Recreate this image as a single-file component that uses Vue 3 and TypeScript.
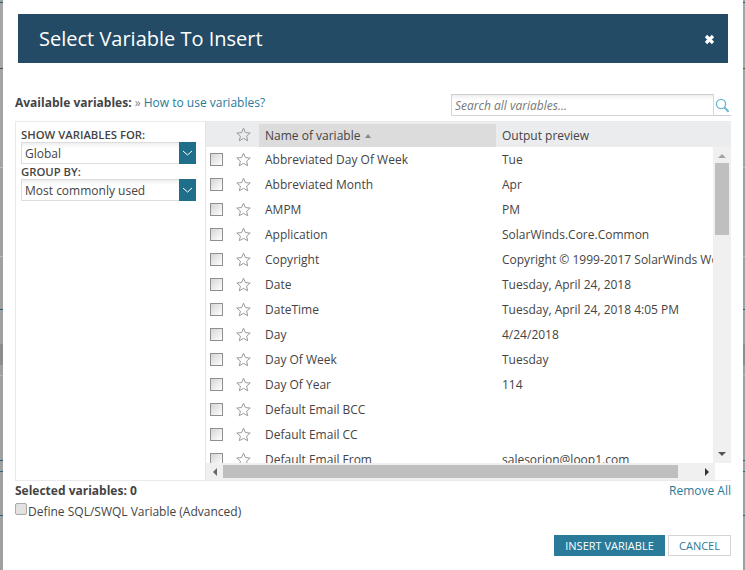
<script setup lang="ts">
interface Row { name: string; preview: string }
const rows: Row[] = [
  { name: 'Abbreviated Day Of Week', preview: 'Tue' },
  { name: 'Abbreviated Month', preview: 'Apr' },
  { name: 'AMPM', preview: 'PM' },
  { name: 'Application', preview: 'SolarWinds.Core.Common' },
  { name: 'Copyright', preview: 'Copyright © 1999-2017 SolarWinds Worldwide' },
  { name: 'Date', preview: 'Tuesday, April 24, 2018' },
  { name: 'DateTime', preview: 'Tuesday, April 24, 2018 4:05 PM' },
  { name: 'Day', preview: '4/24/2018' },
  { name: 'Day Of Week', preview: 'Tuesday' },
  { name: 'Day Of Year', preview: '114' },
  { name: 'Default Email BCC', preview: '' },
  { name: 'Default Email CC', preview: '' },
  { name: 'Default Email From', preview: 'salesorion@loop1.com' },
]
const star = 'M7.5 1.2 9.4 5.6 14.2 6 10.6 9.1 11.7 13.8 7.5 11.3 3.3 13.8 4.4 9.1.8 6 5.6 5.6Z'
</script>

<template>
  <div class="page">
    <div class="edge edge-left"></div>
    <main class="dialog">
      <header class="title-bar">
        <h1>Select Variable To Insert</h1>
        <svg class="close" width="11" height="11" viewBox="0 0 11 11"><path d="M2 2 9 9M9 2 2 9" stroke="#fff" stroke-width="3.2" /></svg>
      </header>

      <div class="tools">
        <div class="avail"><b>Available variables:</b> <span class="raquo">»</span> <a>How to use variables?</a></div>
        <div class="search">
          <div class="search-box">Search all variables...</div>
          <div class="search-btn">
            <svg width="15" height="15" viewBox="0 0 15 15"><circle cx="6" cy="6" r="4.6" fill="none" stroke="#6db7d3" stroke-width="1.4" /><path d="M9.5 9.5 13.6 13.8" stroke="#6db7d3" stroke-width="2" /></svg>
          </div>
        </div>
      </div>

      <section class="panel">
        <aside class="filters">
          <label>SHOW VARIABLES FOR:</label>
          <div class="select"><span>Global</span><i><svg width="11" height="6" viewBox="0 0 11 6"><path d="M1 1 5.5 5 10 1" fill="none" stroke="#fff" stroke-width="1" /></svg></i></div>
          <label>GROUP BY:</label>
          <div class="select"><span>Most commonly used</span><i><svg width="11" height="6" viewBox="0 0 11 6"><path d="M1 1 5.5 5 10 1" fill="none" stroke="#fff" stroke-width="1" /></svg></i></div>
        </aside>

        <div class="grid">
          <div class="head">
            <div class="c-check"></div>
            <div class="c-star"><svg width="15" height="15" viewBox="0 0 15 15"><path :d="star" fill="none" stroke="#9a9a9a" /></svg></div>
            <div class="c-name sorted">Name of variable <span class="sort"></span></div>
            <div class="c-prev">Output preview</div>
          </div>
          <div class="middle">
            <div class="body">
              <div v-for="r in rows" :key="r.name" class="row">
                <div class="c-check"><span class="check"></span></div>
                <div class="c-star"><svg width="15" height="15" viewBox="0 0 15 15"><path :d="star" fill="none" stroke="#9a9a9a" /></svg></div>
                <div class="c-name">{{ r.name }}</div>
                <div class="c-prev">{{ r.preview }}</div>
              </div>
            </div>
            <div class="vbar">
              <span class="arrow up"></span>
              <div class="vtrack"><div class="vthumb"></div></div>
              <span class="arrow down"></span>
            </div>
          </div>
          <div class="hbar">
            <div class="hscroll">
              <span class="arrow left"></span>
              <div class="htrack"><div class="hthumb"></div></div>
              <span class="arrow right"></span>
            </div>
            <div class="corner"></div>
          </div>
        </div>
      </section>

      <div class="selected">
        <b>Selected variables: 0</b>
        <a>Remove All</a>
      </div>
      <div class="define"><span class="native-check"></span>Define SQL/SWQL Variable (Advanced)</div>

      <footer class="actions">
        <button class="primary">INSERT VARIABLE</button>
        <button class="secondary">CANCEL</button>
      </footer>
    </main>
    <div class="edge edge-right"></div>
  </div>
</template>

<style>
html, body { margin: 0; background: #fff; overflow: hidden; }
</style>

<style scoped>
.page {
  width: 745px; height: 570px; display: flex; overflow: hidden;
  font-family: "Open Sans", sans-serif; font-size: 12px; color: #444;
  background: #fff;
}
.edge {
  flex: none;
  background:
    linear-gradient(#9f9f9f 0 2px, #2d6076 2px 3px, #a6a6a6 3px 68px, #5c4a3a 68px 69px, #a3a3a3 69px 167px,
      #bbb 167px 168px, #a0a0a0 168px 256px, #bbb 256px 257px, #a0a0a0 257px 309px, #1f6079 309px 310px,
      #a0a0a0 310px 344px, #8d8d8d 344px 365px, #a0a0a0 365px 375px, #b5b5b5 375px 376px, #a0a0a0 376px 460px,
      #1f5f78 460px 461px, #a0a0a0 461px 471px, #2b6378 471px 472px, #a0a0a0 472px 515px, #2b5f75 515px 516px, #a0a0a0 516px);
}
.edge-left { width: 3px; }
.edge-right { width: 2px; margin-left: auto; }
.dialog { width: 740px; flex: none; padding-top: 14px; box-sizing: border-box; }
.title-bar {
  margin: 0 15px; height: 49px; background: #234b66; color: #fff;
  display: flex; align-items: center; justify-content: space-between;
  padding: 0 13px 0 21px;
}
.title-bar h1 { margin: 0; font-size: 20px; font-weight: 400; line-height: 49px; }
.close { margin-top: 2px; }
.tools {
  margin: 31px 12px 0; height: 27px; display: flex; justify-content: space-between; align-items: flex-start;
}
.avail { line-height: 18px; font-size: 12px; }
.avail b { font-weight: 700; color: #444; }
.raquo { color: #888; }
a { color: #2a7a99; }
.search { display: flex; }
.search-box {
  width: 263px; height: 22px; box-sizing: border-box; border: 1px solid #d5d5d5; border-top-color: #ccc;
  font-style: italic; color: #777; padding-left: 3px; line-height: 22px;
  background: linear-gradient(#eee, #fff 5px);
}
.search-btn { width: 17px; height: 22px; box-sizing: border-box; border-bottom: 1px solid #ccd; display: flex; align-items: center; justify-content: center; padding-top: 1px; }
.panel {
  margin: 0 12px; height: 360px; display: flex; box-sizing: border-box;
  border: 1px solid #eaeaea; border-right: 0;
  width: 716px;
}
.filters { width: 190px; flex: none; box-sizing: border-box; padding: 5px 5px 0; border-right: 1px solid #e4e4e4; }
.filters label { display: block; font-weight: 600; font-size: 11.3px; line-height: 15px; color: #444; }
.select {
  height: 22px; display: flex; box-sizing: border-box; border: 1px solid #ddd;
  background: linear-gradient(#eee, #fff 5px); width: 175px;
}
.select span { flex: 1; padding-left: 3px; line-height: 22px; color: #444; }
.select i { width: 17px; margin: -1px; background: #1f6f8b; display: flex; align-items: center; justify-content: center; }
.grid { flex: 1; min-width: 0; display: flex; flex-direction: column; }
.head { height: 25px; flex: none; display: flex; background: #ebecee; box-sizing: border-box; padding-top: 2px; }
.head .c-star { margin-top: -2px; }
.c-check { width: 20px; flex: none; display: flex; align-items: center; padding-left: 4px; box-sizing: border-box; }
.c-star { width: 33px; flex: none; display: flex; align-items: center; padding-left: 10px; box-sizing: border-box; }
.c-name { width: 237px; flex: none; padding-left: 6px; box-sizing: border-box; line-height: 23px; }
.c-prev { flex: 1; min-width: 0; white-space: nowrap; overflow: hidden; padding-left: 6px; line-height: 23px; }
.sorted { background: #dcdcdc; }
.sort { display: inline-block; border: 3.5px solid transparent; border-bottom: 4px solid #888; border-top: 0; margin-left: 1px; vertical-align: 2px; }
.middle { flex: 1; min-height: 0; display: flex; }
.body { flex: 1; min-width: 0; overflow: hidden; }
.row { height: 25px; display: flex; }
.row .c-name, .row .c-prev { line-height: 25px; }
.check {
  width: 11px; height: 11px; border: 1px solid #8f8f8f; display: block; background: linear-gradient(135deg, #d5d5d5, #fff);
}
.vbar { width: 18px; flex: none; background: #f0f0f0; display: flex; flex-direction: column; align-items: center; }
.vtrack { flex: 1; width: 100%; }
.vthumb { height: 72px; width: 14px; background: #bfbfbf; margin-left: 2px; }
.arrow { display: block; flex: none; width: 0; height: 0; border: 4px solid transparent; }
.arrow.up { border-bottom: 4px solid #a3a3a3; border-top: 0; margin: 7px 0 5px; }
.arrow.down { border-top: 4px solid #555; border-bottom: 0; margin: 5px 0 7px; }
.hbar { height: 17px; flex: none; display: flex; }
.hscroll { flex: 1; background: #f0f0f0; display: flex; align-items: center; }
.arrow.left { border-right: 4px solid #666; border-left: 0; margin: 0 6px 0 7px; }
.arrow.right { border-left: 4px solid #333; border-right: 0; margin: 0 6px 0 27px; }
.htrack { flex: 1; height: 13px; }
.hthumb { width: 455px; height: 13px; background: #bfbfbf; }
.corner { width: 18px; background: #fff; }
.selected {
  margin: 1px 12px 0; display: flex; justify-content: space-between; line-height: 18px; width: 716px; font-size: 12px;
}
.selected b { font-weight: 700; }
.define { margin: 3px 12px 0; display: flex; align-items: center; line-height: 18px; }
.native-check { width: 10px; height: 10px; border: 1px solid #aaa; border-radius: 2px; background: #e2e2e2; margin: -6px 1px 0 0; }
.actions { margin: 14px 12px 0; width: 716px; display: flex; justify-content: flex-end; gap: 3px; }
button { font: inherit; height: 21px; padding: 0; box-sizing: border-box; cursor: pointer; font-size: 11px; font-family: inherit; }
.primary { width: 111px; background: #2a7a99; color: #fff; border: 0; }
.secondary { width: 63px; background: #fff; border: 1px solid #d5d5d5; color: #2a7a99; }
</style>
